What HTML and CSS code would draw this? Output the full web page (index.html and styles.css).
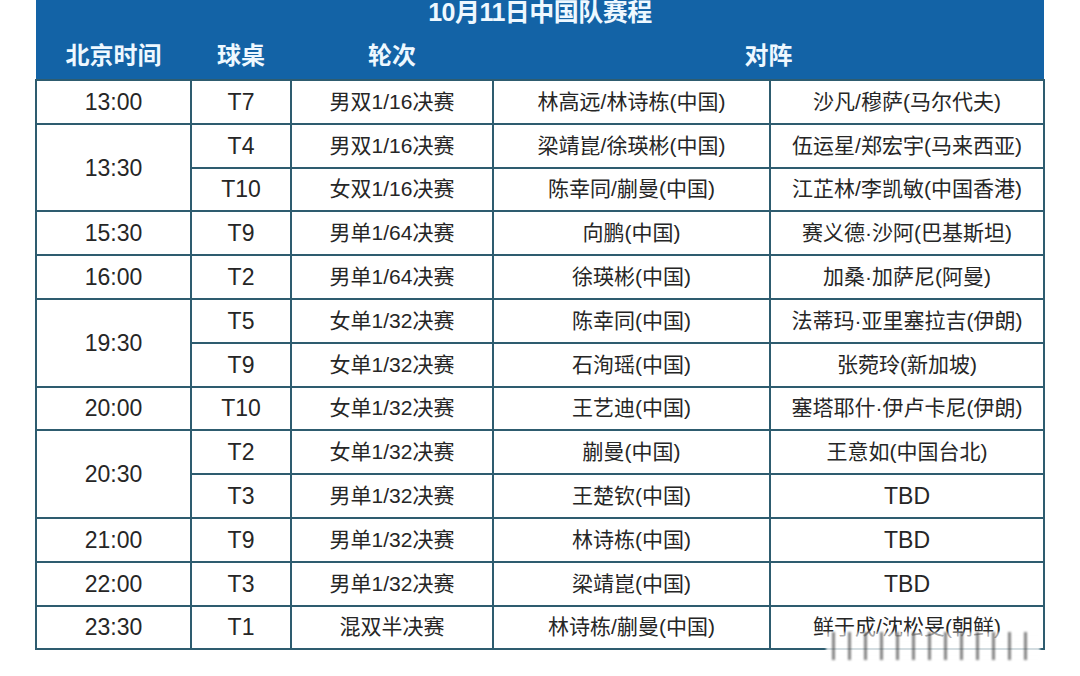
FILE: index.html
```html
<!DOCTYPE html>
<html lang="zh-CN">
<head>
<meta charset="utf-8">
<title>10月11日中国队赛程</title>
<link rel="stylesheet" href="styles.css">
</head>
<body>
<div class="page">
  <table class="schedule">
    <colgroup>
      <col class="c-time"><col class="c-table"><col class="c-round"><col class="c-cn"><col class="c-opp">
    </colgroup>
    <thead>
      <tr class="title-row"><th colspan="5">10月11日中国队赛程</th></tr>
      <tr class="head-row">
        <th>北京时间</th><th>球桌</th><th>轮次</th><th colspan="2">对阵</th>
      </tr>
    </thead>
    <tbody>
      <tr><td class="t">13:00</td><td class="t">T7</td><td>男双1/16决赛</td><td>林高远/林诗栋(中国)</td><td>沙凡/穆萨(马尔代夫)</td></tr>
      <tr><td class="t" rowspan="2">13:30</td><td class="t">T4</td><td>男双1/16决赛</td><td>梁靖崑/徐瑛彬(中国)</td><td>伍运星/郑宏宇(马来西亚)</td></tr>
      <tr><td class="t">T10</td><td>女双1/16决赛</td><td>陈幸同/蒯曼(中国)</td><td>江芷林/李凯敏(中国香港)</td></tr>
      <tr><td class="t">15:30</td><td class="t">T9</td><td>男单1/64决赛</td><td>向鹏(中国)</td><td>赛义德·沙阿(巴基斯坦)</td></tr>
      <tr><td class="t">16:00</td><td class="t">T2</td><td>男单1/64决赛</td><td>徐瑛彬(中国)</td><td>加桑·加萨尼(阿曼)</td></tr>
      <tr><td class="t" rowspan="2">19:30</td><td class="t">T5</td><td>女单1/32决赛</td><td>陈幸同(中国)</td><td>法蒂玛·亚里塞拉吉(伊朗)</td></tr>
      <tr><td class="t">T9</td><td>女单1/32决赛</td><td>石洵瑶(中国)</td><td>张菀玲(新加坡)</td></tr>
      <tr><td class="t">20:00</td><td class="t">T10</td><td>女单1/32决赛</td><td>王艺迪(中国)</td><td>塞塔耶什·伊卢卡尼(伊朗)</td></tr>
      <tr><td class="t" rowspan="2">20:30</td><td class="t">T2</td><td>女单1/32决赛</td><td>蒯曼(中国)</td><td>王意如(中国台北)</td></tr>
      <tr><td class="t">T3</td><td>男单1/32决赛</td><td>王楚钦(中国)</td><td class="t">TBD</td></tr>
      <tr><td class="t">21:00</td><td class="t">T9</td><td>男单1/32决赛</td><td>林诗栋(中国)</td><td class="t">TBD</td></tr>
      <tr><td class="t">22:00</td><td class="t">T3</td><td>男单1/32决赛</td><td>梁靖崑(中国)</td><td class="t">TBD</td></tr>
      <tr><td class="t">23:30</td><td class="t">T1</td><td>混双半决赛</td><td>林诗栋/蒯曼(中国)</td><td class="last">鲜于成/沈松旻(朝鲜)</td></tr>
    </tbody>
  </table>
  <div class="watermark" aria-hidden="true"></div>
</div>
</body>
</html>
```

FILE: styles.css
```css
html, body {
  margin: 0;
  padding: 0;
  background: #ffffff;
}

.page {
  position: relative;
  width: 1080px;
  height: 676px;
  overflow: hidden;
  padding-left: 35px;
  box-sizing: border-box;
}

.schedule {
  border-collapse: collapse;
  table-layout: fixed;
  width: 1008px;
  font-family: "Liberation Sans", "Noto Sans CJK SC", sans-serif;
  color: #262626;
}

.c-time { width: 155px; }
.c-table { width: 100px; }
.c-round { width: 202px; }
.c-cn { width: 277px; }
.c-opp { width: 274px; }

.schedule thead th {
  background: #1363a6;
  color: #eef8ff;
  font-weight: 700;
  border: none;
  padding: 0;
}

.schedule .title-row th {
  height: 27px;
  font-size: 25px;
  line-height: 24px;
  vertical-align: top;
  letter-spacing: -0.5px;
}

.schedule .head-row th {
  height: 53px;
  font-size: 24px;
  line-height: 28px;
  vertical-align: top;
  padding-top: 15px;
  box-sizing: border-box;
}

.schedule tbody td {
  height: 41.8px;
  padding: 0;
  border: 2px solid #2e5c6f;
  text-align: center;
  vertical-align: middle;
  font-size: 21px;
  line-height: 24px;
  background: #ffffff;
  white-space: nowrap;
}

.schedule tbody td.t {
  font-size: 23px;
}

.watermark {
  position: absolute;
  left: 826px;
  top: 632px;
  width: 214px;
  height: 28px;
  background:
    repeating-linear-gradient(90deg,
      rgba(255,255,255,0) 0px, rgba(255,255,255,0) 6px,
      rgba(50,50,50,0.6) 6px, rgba(50,50,50,0.6) 9px,
      rgba(255,255,255,0) 9px, rgba(255,255,255,0) 16px),
    linear-gradient(to bottom, rgba(255,255,255,0.55), rgba(255,255,255,0.95));
  filter: blur(1.2px);
}
```
